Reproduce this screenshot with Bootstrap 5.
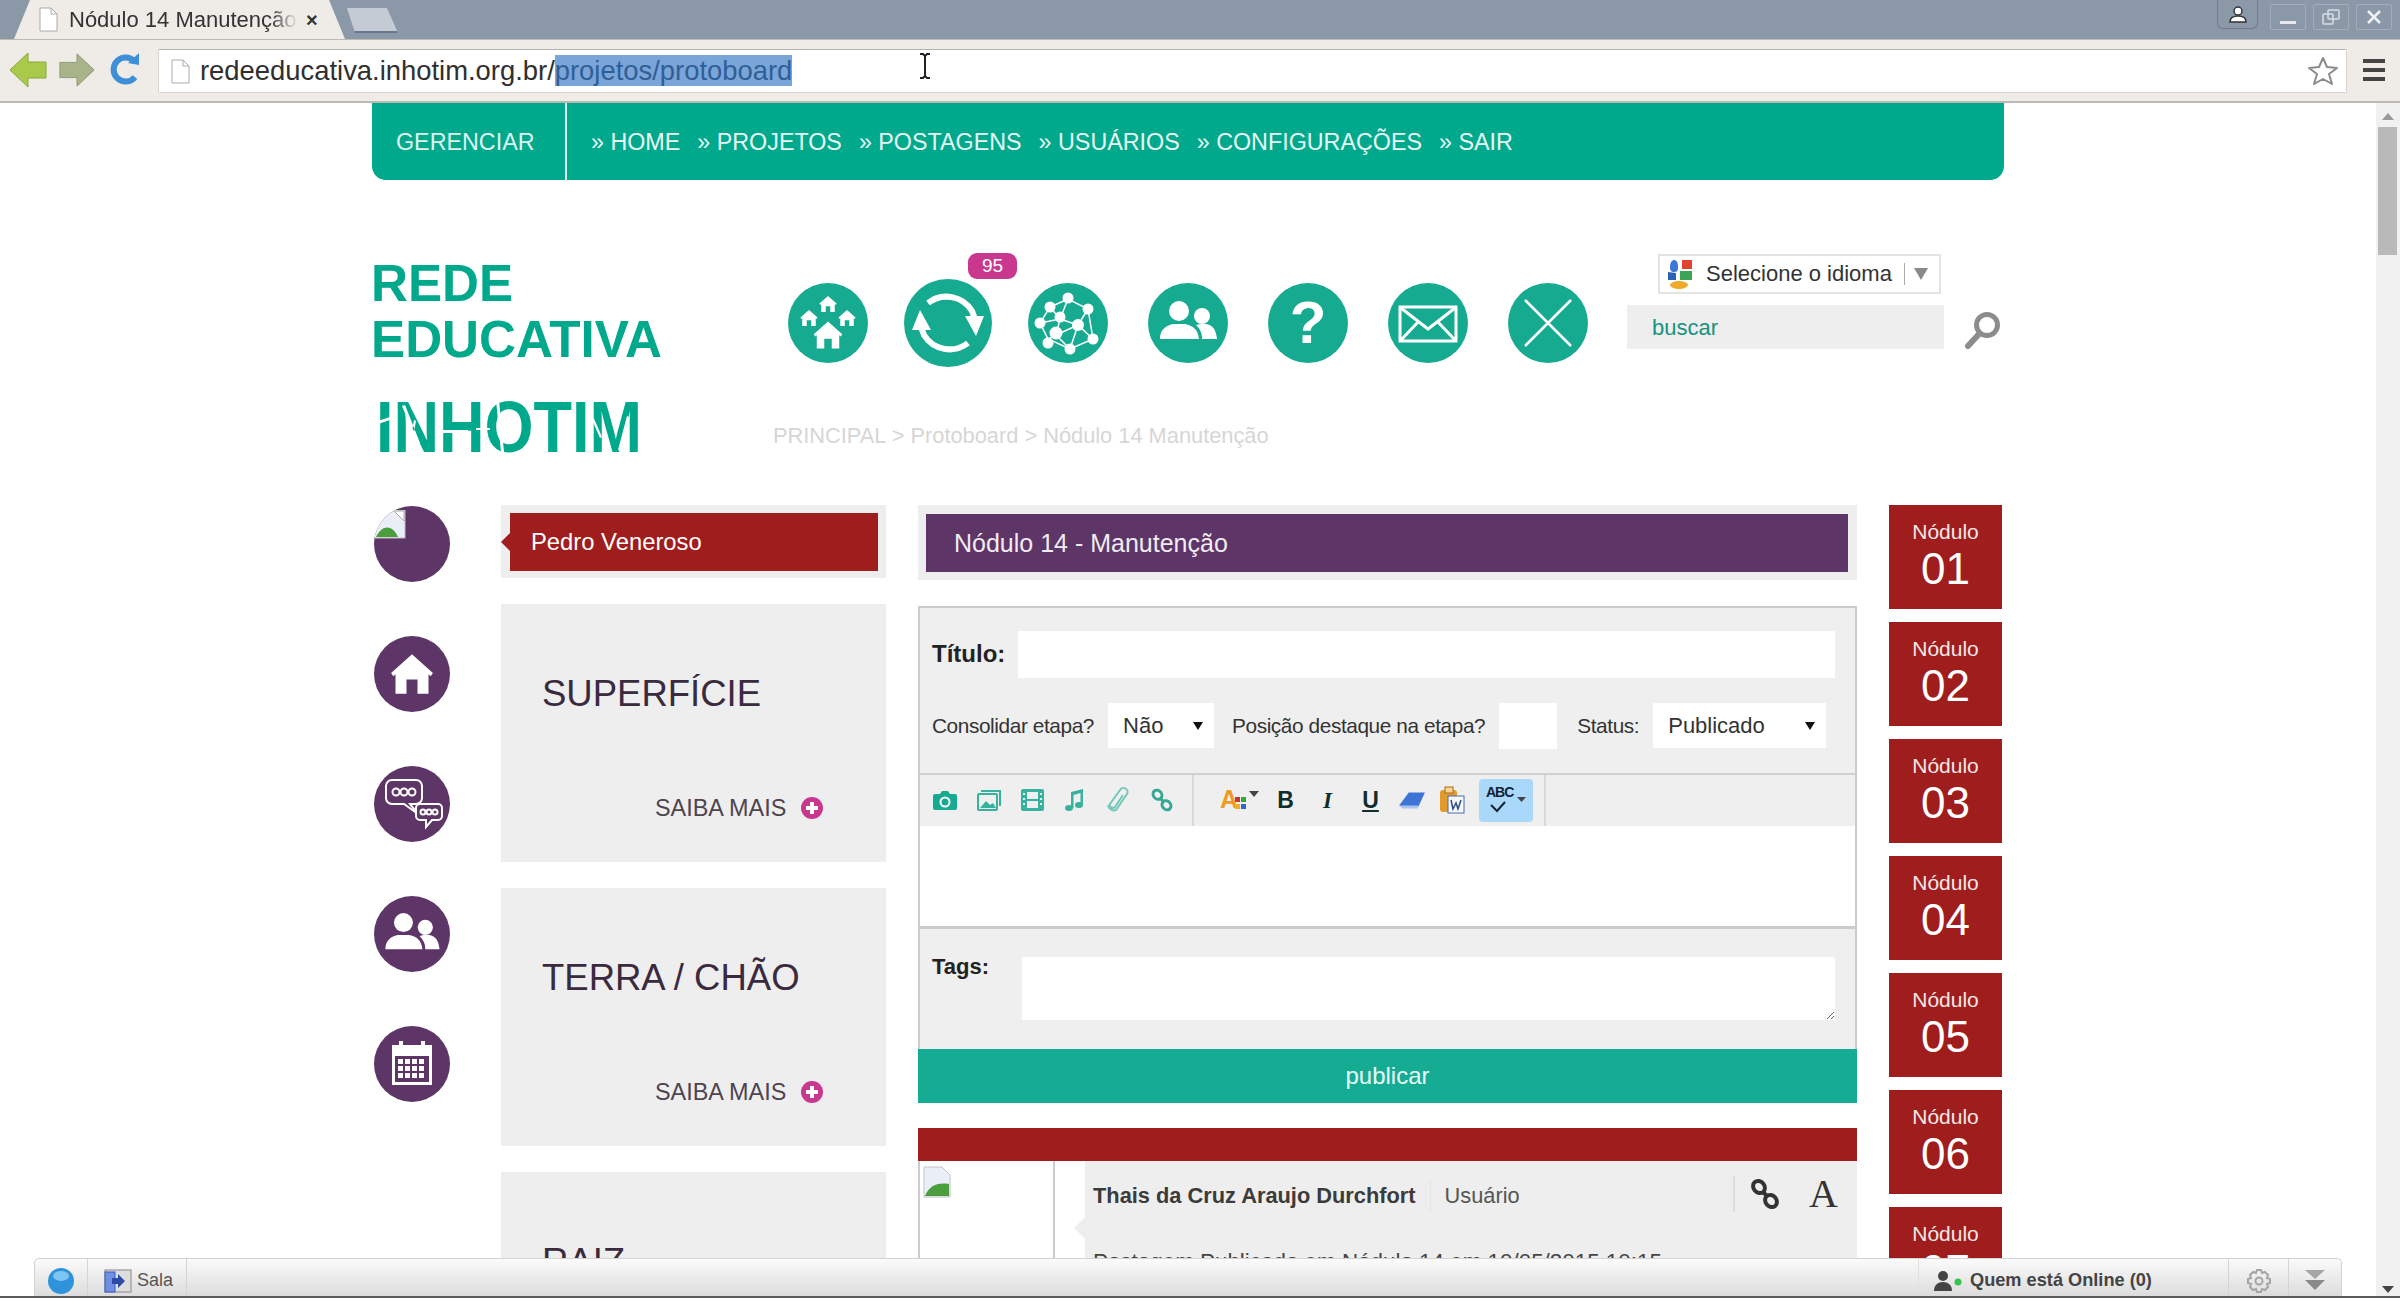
<!DOCTYPE html>
<html lang="pt-BR">
  <head>
    <meta charset="UTF-8" />
    <meta name="viewport" content="width=device-width, initial-scale=1.0" />
    <title>Nódulo 14 Manutenção</title>
    <link rel="stylesheet" href="https://cdn.jsdelivr.net/npm/bootstrap@5.3.2/dist/css/bootstrap.min.css" />
    <style>
      html, body { height: 100%; overflow: hidden; }
      body { font-family: "Liberation Sans", Arial, sans-serif; font-size: 22px; color: #333; background: #fff; }
      .app-root { height: 1298px; border-bottom: 2px solid #5a5a5a; position: relative; overflow: hidden; }

      /* janela do navegador */
      .tab-strip { height: 40px; background: #8b98a8; border-bottom: 1px solid #bdb9b5; padding-left: 14px; }
      .tab-active { width: 331px; height: 39px; background: #efebe7; clip-path: polygon(0 100%, 16px 0, 315px 0, 100% 100%); padding-left: 25px; font-size: 22px; color: #333; white-space: nowrap; }
      .tab-title { width: 232px; padding-left: 3px; overflow: hidden; -webkit-mask-image: linear-gradient(90deg, #000 88%, transparent); mask-image: linear-gradient(90deg, #000 88%, transparent); }
      .tab-new { width: 51px; height: 25px; margin: 8px 0 0 2px; background: #c4cbd4; border-bottom: 2px solid #69778a; clip-path: polygon(0 0, 40px 0, 100% 100%, 8px 100%); }
      .win-btn { width: 36px; height: 26px; border: 1px solid #a3aebb; border-radius: 2px; margin: 4px 0 0 7px; }
      .win-user { width: 41px; height: 29px; margin: 0 5px 0 0; border: 1px solid #6f7d8f; border-top: 0; border-radius: 0 0 6px 6px; }
      .tool-strip { height: 63px; background: #efebe7; border-bottom: 2px solid #bdbab6; }
      .url-box { position: absolute; left: 158px; top: 49px; width: 2189px; height: 44px; background: #fff; border: 1px solid #d8d5d1; border-top-color: #b5b3b0; border-radius: 2px; font-size: 27.4px; color: #2f2f2f; padding-left: 41px; line-height: 42px; }
      .url-sel { background: #7aa5d8; color: #2f5f96; }

      /* pagina */
      .page-area { height: 1195px; overflow: hidden; }
      .page-main { width: 2376px; }
      .scroll-rail { width: 24px; background: #f1f1f1; position: relative; }
      .scroll-thumb { position: absolute; left: 2px; top: 24px; width: 19px; height: 128px; background: #b9b9b9; }
      .scroll-up, .scroll-down { position: absolute; left: 6px; width: 0; height: 0; border-left: 6px solid transparent; border-right: 6px solid transparent; }
      .scroll-up { top: 10px; border-bottom: 7px solid #9a9a9a; }
      .scroll-down { top: 1183px; border-top: 7px solid #444; }
      .site-wrap { width: 1632px; margin: 0 auto; }
      .top-nav { height: 77px; background: #00a88c; border-radius: 0 0 14px 14px; font-size: 23.3px; color: #dff5ef; }
      .top-nav-manage { width: 195px; padding: 2px 0 0 24px; border-right: 2px solid #dff5ef; }
      .top-nav a { color: #e6f8f3; text-decoration: none; white-space: nowrap; }
      .top-nav-links { padding: 2px 0 0 24px; gap: 17px; }

      .site-head { height: 325px; }
      .logo-col { width: 416px; padding-top: 76px; }
      .logo-name { font-size: 51.2px; font-weight: 700; line-height: 56px; color: #00a88c; margin-left: -1px; }
      .logo-mark { display: block; margin-top: 17px; }
      .head-right { padding-top: 74px; }
      .icon-row { gap: 40px; margin-top: 29px; width: 799px; }
      .round-teal { width: 80px; height: 80px; border-radius: 50%; background: #16ab91; flex: none; position: relative; }
      .round-big { width: 88px; height: 88px; margin: -4px; }
      .round-badge { position: absolute; top: -26px; left: 64px; width: 49px; height: 26px; border-radius: 9px; background: #c9378f; color: #fff; font-size: 19px; line-height: 26px; text-align: center; }
      .round-q { color: #fff; font-weight: 700; font-size: 60px; line-height: 80px; text-align: center; }
      .search-col { margin-left: 40px; }
      .lang-box { width: 283px; height: 40px; margin-left: 31px; border: 2px solid #e3e3e3; padding-left: 6px; color: #333; font-size: 22px; white-space: nowrap; }
      .lang-sep { width: 1px; height: 22px; background: #aaa; margin: 0 9px 0 12px; }
      .lang-arrow { width: 0; height: 0; border-left: 7px solid transparent; border-right: 7px solid transparent; border-top: 12px solid #8a8a8a; }
      .search-box { width: 317px; height: 44px; margin-top: 11px; background: #eee; color: #16927e; font-size: 22px; padding: 2px 0 0 25px; }
      .crumbs { margin: 58px 0 0 -15px; color: #d6d6d6; font-size: 21.8px; line-height: 30px; white-space: nowrap; }

      .col-side { width: 129px; padding: 1px 0 0 2px; gap: 54px; }
      .round-purple { width: 76px; height: 76px; border-radius: 50%; background: #5d3566; overflow: hidden; flex: none; }
      .col-themes { width: 385px; }
      .col-center { width: 939px; margin: 0 32px; }
      .col-nodes { width: 113px; gap: 13px; }
      .name-panel { height: 73px; background: #eee; padding: 8px 8px 7px 9px; margin-bottom: 26px; }
      .name-bar { height: 58px; background: #9f1d1d; color: #fff; font-size: 23.8px; line-height: 58px; padding-left: 21px; position: relative; }
      .name-bar::before { content: ""; position: absolute; left: -9px; top: 20px; border-top: 9px solid transparent; border-bottom: 9px solid transparent; border-right: 9px solid #9f1d1d; }
      .theme-box { height: 258px; background: #eee; margin-bottom: 26px; padding: 67px 0 0 41px; color: #3a2a3e; }
      .theme-title { font-size: 36.5px; line-height: 46px; }
      .theme-more { margin: 77px 0 0 113px; font-size: 23.4px; line-height: 28px; color: #4d4450; gap: 15px; }
      .plus-dot { width: 22px; height: 22px; border-radius: 50%; background: #c9378f; position: relative; }
      .plus-dot::before { content: ""; position: absolute; left: 5px; right: 5px; top: 9px; height: 4px; background: #fff; }
      .plus-dot::after { content: ""; position: absolute; top: 5px; bottom: 5px; left: 9px; width: 4px; background: #fff; }

      .title-panel { height: 75px; background: #eee; padding: 9px 9px 8px 8px; margin-bottom: 26px; }
      .title-bar { height: 58px; background: #5d3566; color: #f1ecf3; font-size: 25px; line-height: 58px; padding-left: 28px; }
      .form-shell { background: #efefef; border: 2px solid #ccc; border-bottom: 0; }
      .form-head { height: 167px; padding: 23px 20px 0 12px; border-bottom: 2px solid #d0d0d0; }
      .lbl-strong { font-weight: 700; color: #222; font-size: 24px; }
      .lbl-plain { font-size: 20.8px; letter-spacing: -.4px; color: #333; white-space: nowrap; }
      .field-title { width: 817px; height: 47px; margin-left: 13px; border: 0; border-radius: 0; }
      .field-row { margin-top: 25px; }
      .field-sel { height: 45px; border: 0; border-radius: 0; font-size: 22px; color: #333; padding: 0 0 0 15px; background-position: right 10px center; background-size: 12px 10px; background-image: url("data:image/svg+xml,%3Csvg xmlns='http://www.w3.org/2000/svg' viewBox='0 0 12 10'%3E%3Cpath d='M1 1h10L6 9z' fill='%23111'/%3E%3C/svg%3E"); }
      .field-pos { width: 58px; height: 46px; border: 0; border-radius: 0; }
      .gap-14 { margin-left: 14px; }
      .gap-18 { margin-left: 18px; }
      .gap-20 { margin-left: 20px; }
      .tool-bar { height: 51px; }
      .tool-group { width: 274px; height: 51px; padding-left: 13px; border-right: 2px solid #d8d8d8; gap: 20px; }
      .tool-group2 { width: 352px; height: 51px; padding-left: 26px; border-right: 2px solid #d8d8d8; position: relative; }
      .tool-abc { position: absolute; left: 285px; top: 4px; width: 54px; height: 43px; background: #a9d8fb; border-radius: 4px; }
      .tool-abc-t { font-size: 14px; font-weight: 700; color: #123; line-height: 14px; position: absolute; left: 7px; top: 6px; letter-spacing: -1px; }
      .tool-b { font-weight: 700; font-size: 23px; color: #0f2e2e; line-height: 1; }
      .editor-area { height: 103px; background: #fff; border-bottom: 3px solid #ccc; }
      .tags-row { height: 120px; padding: 28px 20px 0 12px; }
      .tags-lbl { width: 90px; font-size: 22px; margin-top: -7px; }
      .tags-field { height: 63px; border: 0; border-radius: 0; flex: 1; }
      .btn-publish { height: 54px; background: #16ab93; color: #e9fbf7; font-size: 24px; border: 0; border-radius: 0; width: 100%; padding: 0; }
      .post-bar { height: 33px; background: #9f1d1d; margin-top: 25px; }
      .post-body { height: 300px; }
      .post-avatar { width: 137px; background: #fff; border: 2px solid #ccc; border-top: 0; border-bottom: 0; flex: none; padding: 3px 0 0 3px; }
      .post-gap { width: 30px; flex: none; position: relative; }
      .post-gap::after { content: ""; position: absolute; right: 0; top: 56px; border-top: 11px solid transparent; border-bottom: 11px solid transparent; border-right: 11px solid #eee; }
      .post-panel { background: #eee; padding: 19px 0 0 8px; }
      .post-head { height: 32px; }
      .post-author { font-weight: 700; font-size: 21.8px; color: #3b3b3b; white-space: nowrap; padding-right: 14px; border-right: 1px solid #e4e4e4; }
      .post-role { color: #555; font-size: 21.8px; padding-left: 14px; }
      .post-tools { margin-left: auto; width: 124px; border-left: 2px solid #ddd; height: 36px; padding-left: 15px; margin-top: -4px; }
      .post-serif { font-family: "Liberation Serif", serif; font-size: 40px; line-height: 36px; color: #333; margin-left: 29px; }
      .post-meta { margin-top: 33px; font-size: 22.4px; color: #444; white-space: nowrap; }
      .node-box { height: 104px; background: #9f1d1d; color: #f6e7e7; text-align: center; font-size: 21px; line-height: 24px; padding-top: 15px; flex: none; }
      .node-num { display: block; font-size: 44px; line-height: 50px; color: #fff; }

      /* barra inferior */
      .chat-bar { position: absolute; left: 34px; top: 1258px; width: 2308px; height: 38px; background: linear-gradient(#fbfbfb, #dcdcdc); border: 1px solid #d3d3d3; border-bottom: 0; border-radius: 5px 5px 0 0; font-size: 18px; color: #555; }
      .chat-cell { height: 100%; padding-top: 6px; border-right: 1px solid #d4d4d4; }
      .chat-online { font-weight: 700; font-size: 18.2px; color: #444; white-space: nowrap; }
      .cursor-beam { position: absolute; left: 918px; top: 53px; }
    </style>
  </head>
  <body>
    <svg class="d-none">
      <symbol id="i-house" viewBox="0 0 40 38"><path d="M20 1 39 18l-2 3-2-1.700V37H25V24H15V37H5V19.300L3 21 1 18z" fill="#fff" /></symbol>
      <symbol id="i-users" viewBox="0 0 80 80"><circle cx="31" cy="28" r="10" fill="#fff" /><circle cx="54" cy="33" r="8" fill="#fff" /><path d="M12 56c0-9 5-13 13-15h12c9 2 13 6 14 15zM48 42c3-1 5-1 10-1 7 1 10 6 11 15H54c0-6-2-10-6-14z" fill="#fff" /></symbol>
      <symbol id="i-link" viewBox="0 0 30 32"><g fill="none" stroke="currentColor" stroke-width="4"><ellipse cx="9" cy="9" rx="5.500" ry="6.500" transform="rotate(-40 9 9)" /><ellipse cx="21" cy="23" rx="5.500" ry="6.500" transform="rotate(-40 21 23)" /><path d="M12 13l6 6" /></g></symbol>
    </svg>

    <div class="app-root d-flex flex-column">
      <div class="tab-strip d-flex flex-none">
        <div class="tab-active d-flex align-items-center">
          <svg width="19" height="25" viewBox="0 0 19 25" class="me-2 flex-shrink-0"><path d="M1 1h11l6 6v17H1z" fill="#fff" stroke="#aaa" /><path d="M12 1v6h6" fill="none" stroke="#aaa" /></svg>
          <span class="tab-title">Nódulo 14 Manutenção</span>
          <span class="ms-2 fw-bold" style="font-size:20px">×</span>
        </div>
        <div class="tab-new"></div>
        <div class="ms-auto d-flex me-2">
          <div class="win-user d-flex align-items-center justify-content-center">
            <svg width="18" height="18" viewBox="0 0 18 18"><circle cx="9" cy="6" r="4" fill="#fff" stroke="#333" stroke-width="1.500" /><path d="M1 17c0-5 4-6 8-6s8 1 8 6z" fill="#fff" stroke="#333" stroke-width="1.500" /></svg>
          </div>
          <div class="win-btn d-flex align-items-end justify-content-center pb-1"><svg width="16" height="4"><rect width="16" height="3" fill="#e6e9ee" /></svg></div>
          <div class="win-btn d-flex align-items-center justify-content-center"><svg width="18" height="16" viewBox="0 0 18 16" fill="none" stroke="#d8dde4" stroke-width="1.500"><rect x="6" y="1" width="11" height="9" rx="1" /><rect x="1" y="5" width="10" height="10" rx="1" /></svg></div>
          <div class="win-btn d-flex align-items-center justify-content-center"><svg width="16" height="16" stroke="#eef0f3" stroke-width="2.500"><path d="M2 2l12 12M14 2 2 14" /></svg></div>
        </div>
      </div>
      <div class="tool-strip d-flex align-items-center flex-none">
        <svg width="40" height="40" viewBox="0 0 40 40" class="ms-2"><path d="M2 20 20 3v9h18v16H20v9z" fill="#a9c94a" stroke="#8aa836" /></svg>
        <svg width="38" height="40" viewBox="0 0 40 40" style="margin-left:10px"><path d="M38 20 20 3v9H2v16h18v9z" fill="#a8b38a" stroke="#8f9a74" /></svg>
        <svg width="34" height="40" viewBox="0 0 34 40" style="margin-left:12px"><path d="M27 27a12 12 0 1 1 0-15" fill="none" stroke="#3f8fd8" stroke-width="6" /><path d="M20 13 31 3v12z" fill="#3f8fd8" /></svg>
      </div>
      <div class="url-box">
        <svg width="19" height="25" viewBox="0 0 19 25" class="position-absolute" style="left:12px;top:9px"><path d="M1 1h11l6 6v17H1z" fill="#fff" stroke="#aaa" /><path d="M12 1v6h6" fill="none" stroke="#aaa" /></svg>
        redeeducativa.inhotim.org.br/<span class="url-sel">projetos/protoboard</span>
        <svg width="30" height="30" viewBox="0 0 30 30" class="position-absolute" style="right:8px;top:6px"><path d="M15 2l4 9 10 1-8 6 3 10-9-5-9 5 3-10-8-6 10-1z" fill="#fff" stroke="#8a8a8a" stroke-width="2" stroke-linejoin="round" /></svg>
      </div>
      <svg width="24" height="24" viewBox="0 0 24 24" class="position-absolute" style="left:2362px;top:58px"><path d="M1 3h22M1 12h22M1 21h22" stroke="#444" stroke-width="4" /></svg>
      <svg class="cursor-beam" width="14" height="26" viewBox="0 0 14 26"><path d="M2 1h3l2 2 2-2h3M7 3v20M2 25h3l2-2 2 2h3" fill="none" stroke="#222" stroke-width="2" /></svg>

      <div class="page-area d-flex">
        <div class="page-main">
          <div class="site-wrap">
            <nav class="top-nav d-flex align-items-center">
              <div class="top-nav-manage h-100 d-flex align-items-center">GERENCIAR</div>
              <div class="top-nav-links d-flex">
                <a href="#">» HOME</a>
                <a href="#">» PROJETOS</a>
                <a href="#">» POSTAGENS</a>
                <a href="#">» USUÁRIOS</a>
                <a href="#">» CONFIGURAÇÕES</a>
                <a href="#">» SAIR</a>
              </div>
            </nav>

            <header class="site-head d-flex">
              <div class="logo-col">
                <div class="logo-name">REDE<br />EDUCATIVA</div>
                <svg class="logo-mark" width="340" height="84" viewBox="0 -13 340 84">
                  <text x="4" y="54" font-family="Liberation Sans" font-weight="700" font-size="73" fill="#00a88c" textLength="266" lengthAdjust="spacingAndGlyphs">INHOTIM</text>
                  <path d="M3 24 18 19v3L3 27zM30 8 46 46l2-1L33 7zM38 44l4-22 2 1-4 22zM68 32h28v3H68zM81 36h3v5h-3zM81 44h3v2h-3zM124 2l5 52h3L127 2zM104 30h14v2h-14zM214 8l14 32 2-1-14-32zM246 52l9-34 2 1-9 34zM186 28h14v2h-14z" fill="#fff" />
                </svg>
              </div>
              <div class="head-right flex-grow-1">
                <div class="d-flex">
                  <div class="icon-row d-flex align-items-center">
                    <div class="round-teal">
                      <svg width="80" height="80" viewBox="0 0 80 80">
                        <use href="#i-house" x="25" y="37" width="30" height="30" />
                        <use href="#i-house" x="31" y="12" width="18" height="18" />
                        <use href="#i-house" x="12" y="26" width="18" height="18" />
                        <use href="#i-house" x="50" y="26" width="18" height="18" />
                      </svg>
                    </div>
                    <div class="round-teal round-big">
                      <svg width="88" height="88" viewBox="0 0 88 88" fill="none" stroke="#fff" stroke-width="6">
                        <path d="M24 24a30 30 0 0 1 44 8l3 8M64 64a30 30 0 0 1-44-8l-3-8" />
                        <path d="M61 37h19l-8 20zM27 51H8l8-20z" fill="#fff" stroke="none" />
                      </svg>
                      <span class="round-badge">95</span>
                    </div>
                    <div class="round-teal">
                      <svg width="80" height="80" viewBox="0 0 80 80">
                        <g stroke="#fff" stroke-width="1.500" fill="none"><path d="M22 24 40 16 60 26 65 56 42 66 20 56 12 40 22 24 32 36 28 52 42 66 M40 16 32 36 50 42 60 26 M50 42 65 56 M50 42 28 52 20 56 M12 40 32 36 M50 42 42 66" /></g>
                        <g fill="#fff"><circle cx="22" cy="24" r="5.500" /><circle cx="40" cy="15" r="5.500" /><circle cx="60" cy="26" r="5.500" /><circle cx="12" cy="40" r="5.500" /><circle cx="32" cy="34" r="5.500" /><circle cx="50" cy="42" r="6" /><circle cx="28" cy="50" r="6.500" /><circle cx="20" cy="60" r="5.500" /><circle cx="42" cy="66" r="5.500" /><circle cx="65" cy="56" r="5.500" /></g>
                      </svg>
                    </div>
                    <div class="round-teal"><svg width="80" height="80"><use href="#i-users" /></svg></div>
                    <div class="round-teal round-q">?</div>
                    <div class="round-teal">
                      <svg width="80" height="80" viewBox="0 0 80 80" fill="none" stroke="#fff" stroke-width="3"><rect x="12" y="24" width="56" height="34" /><path d="M13 25 40 46 67 25M13 57 31 38M67 57 49 38" /></svg>
                    </div>
                    <div class="round-teal">
                      <svg width="80" height="80" viewBox="0 0 80 80" stroke="#fff" stroke-width="2.500"><path d="M17 17 63 63M63 17 17 63" /></svg>
                    </div>
                  </div>
                  <div class="search-col">
                    <div class="lang-box d-flex align-items-center">
                      <svg width="30" height="32" viewBox="0 0 30 32" class="flex-shrink-0" style="margin-right:10px"><path d="M8 2c3 0 4 3 4 7s-1 5-4 5-4-2-4-5 1-7 4-7z" fill="#3b78d8" /><path d="M16 2h10v9H16z" fill="#e0442f" /><path d="M2 14l8 1v7H2z" fill="#2a62b8" /><path d="M14 13h12v9H14z" fill="#3aa655" /><ellipse cx="13" cy="27" rx="9" ry="4" fill="#f0a92b" /></svg>
                      <span>Selecione o idioma</span><span class="lang-sep"></span><span class="lang-arrow"></span>
                    </div>
                    <div class="d-flex">
                      <div class="search-box d-flex align-items-center">buscar</div>
                      <svg width="40" height="40" viewBox="0 0 40 40" style="margin:16px 0 0 19px"><circle cx="24" cy="15" r="10.500" fill="none" stroke="#8c8c8c" stroke-width="5" /><path d="M16 24 5 36" stroke="#8c8c8c" stroke-width="6" stroke-linecap="round" /></svg>
                    </div>
                  </div>
                </div>
                <div class="crumbs">PRINCIPAL &gt; Protoboard &gt; Nódulo 14 Manutenção</div>
              </div>
            </header>

            <main class="d-flex align-items-start">
              <aside class="col-side d-flex flex-column flex-none">
                <div class="round-purple">
                  <svg width="32" height="29" viewBox="0 0 32 29"><rect width="31" height="28" fill="#e9eef7" stroke="#bbb" /><path d="M2 27C8 15 18 14 24 27z" fill="#4a9f3c" /><path d="M20 1h10v10z" fill="#fff" stroke="#aaa" /></svg>
                </div>
                <div class="round-purple d-flex align-items-center justify-content-center"><svg width="44" height="42"><use href="#i-house" /></svg></div>
                <div class="round-purple">
                  <svg width="76" height="76" viewBox="0 0 76 76" fill="none" stroke="#fff" stroke-width="2">
                    <path d="M18 14h24a6 6 0 0 1 6 6v12a6 6 0 0 1-6 6h-6l8 10-14-10H18a6 6 0 0 1-6-6V20a6 6 0 0 1 6-6z" />
                    <circle cx="22" cy="26" r="3.500" /><circle cx="30" cy="26" r="3.500" /><circle cx="38" cy="26" r="3.500" />
                    <path d="M46 38h18a4 4 0 0 1 4 4v8a4 4 0 0 1-4 4H58l-6 7 0-7h-6a4 4 0 0 1-4-4v-8a4 4 0 0 1 4-4z" fill="#5d3566" />
                    <circle cx="49" cy="46" r="2.500" /><circle cx="55" cy="46" r="2.500" /><circle cx="61" cy="46" r="2.500" />
                  </svg>
                </div>
                <div class="round-purple"><svg width="76" height="76" viewBox="0 0 80 80"><use href="#i-users" /></svg></div>
                <div class="round-purple">
                  <svg width="76" height="76" viewBox="0 0 76 76" fill="#fff">
                    <path d="M18 19h40v40H18zM21 30v26h34V30z" fill-rule="evenodd" /><rect x="25" y="15" width="4" height="8" /><rect x="47" y="15" width="4" height="8" />
                    <path d="M24 33h5v5h-5zM31 33h5v5h-5zM38 33h5v5h-5zM45 33h5v5h-5zM24 40h5v5h-5zM31 40h5v5h-5zM38 40h5v5h-5zM45 40h5v5h-5zM24 47h5v5h-5zM31 47h5v5h-5zM38 47h5v5h-5zM45 47h5v5h-5z" />
                  </svg>
                </div>
              </aside>

              <section class="col-themes flex-none">
                <div class="name-panel"><div class="name-bar">Pedro Veneroso</div></div>
                <div class="theme-box">
                  <div class="theme-title">SUPERFÍCIE</div>
                  <div class="theme-more d-flex align-items-center">SAIBA MAIS <span class="plus-dot"></span></div>
                </div>
                <div class="theme-box">
                  <div class="theme-title">TERRA / CHÃO</div>
                  <div class="theme-more d-flex align-items-center">SAIBA MAIS <span class="plus-dot"></span></div>
                </div>
                <div class="theme-box">
                  <div class="theme-title">RAIZ</div>
                </div>
              </section>

              <section class="col-center flex-none">
                <div class="title-panel"><div class="title-bar">Nódulo 14 - Manutenção</div></div>
                <form class="form-shell">
                  <div class="form-head">
                    <div class="d-flex align-items-center">
                      <label class="lbl-strong">Título:</label>
                      <input class="form-control field-title" type="text" />
                    </div>
                    <div class="field-row d-flex align-items-center">
                      <label class="lbl-plain">Consolidar etapa?</label>
                      <select class="form-select field-sel gap-14" style="width:106px"><option>Não</option></select>
                      <label class="lbl-plain gap-18">Posição destaque na etapa?</label>
                      <input class="form-control field-pos gap-14" type="text" />
                      <label class="lbl-plain gap-20">Status:</label>
                      <select class="form-select field-sel gap-14" style="width:173px"><option>Publicado</option></select>
                    </div>
                  </div>
                  <div class="tool-bar d-flex">
                    <div class="tool-group d-flex align-items-center">
                      <svg width="24" height="22" viewBox="0 0 24 22"><path d="M2 5h5l2-3h6l2 3h5a2 2 0 0 1 2 2v12a2 2 0 0 1-2 2H2a2 2 0 0 1-2-2V7a2 2 0 0 1 2-2z" fill="#16ab91" /><circle cx="12" cy="13" r="4.500" fill="none" stroke="#fff" stroke-width="2" /></svg>
                      <svg width="24" height="22" viewBox="0 0 24 22" fill="none" stroke="#35b39d" stroke-width="2"><rect x="1" y="5" width="19" height="16" rx="1" /><path d="M4 2h19v15" /><path d="M3 19l6-7 4 4 3-2 3 5z" fill="#35b39d" stroke="none" /></svg>
                      <svg width="23" height="22" viewBox="0 0 23 22"><rect width="23" height="22" rx="2" fill="#35b39d" /><path d="M6 3h11v7H6zM6 12h11v7H6z" fill="#efefef" /><path d="M2 4h2v2H2zM2 9h2v2H2zM2 14h2v2H2zM19 4h2v2h-2zM19 9h2v2h-2zM19 14h2v2h-2z" fill="#efefef" /></svg>
                      <svg width="22" height="24" viewBox="0 0 22 24" fill="#35b39d"><path d="M7 4l12-3v15h-2.500V5L9.500 7v13H7z" /><ellipse cx="5" cy="20" rx="4" ry="3" /><ellipse cx="15" cy="17" rx="4" ry="3" /></svg>
                      <svg width="24" height="26" viewBox="0 0 24 26" fill="none" stroke="#75c8b8" stroke-width="2"><path d="M17 8 9 20a3 3 0 0 1-5-3L14 3a4 4 0 0 1 7 4L10 23a6 6 0 0 1-8-5" /></svg>
                      <svg width="24" height="24" style="color:#35a893"><use href="#i-link" /></svg>
                    </div>
                    <div class="tool-group2 d-flex align-items-center">
                      <span style="width:46px" class="position-relative">
                        <span class="fw-bold" style="color:#ef9a1f;font-size:25px;line-height:1">A</span>
                        <svg width="14" height="14" class="position-absolute" style="left:15px;top:13px"><rect width="5" height="5" x="0" y="0" fill="#c33" /><rect width="5" height="5" x="6" y="0" fill="#3a3" /><rect width="5" height="5" x="0" y="7" fill="#f0b020" /><rect width="5" height="5" x="6" y="7" fill="#36c" /></svg>
                        <svg width="10" height="6" class="position-absolute" style="left:29px;top:7px"><path d="M0 0h10L5 6z" fill="#444" /></svg>
                      </span>
                      <span class="tool-b" style="width:41px;text-align:center;margin-left:-1px">B</span>
                      <span class="tool-b fst-italic" style="width:43px;text-align:center;font-family:'Liberation Serif',serif">I</span>
                      <span class="tool-b text-decoration-underline" style="width:43px;text-align:center">U</span>
                      <svg width="28" height="22" viewBox="0 0 26 20" style="margin:0 13px 0 6px"><path d="M1 15 10 3h15l-6 13H5z" fill="#3e74d6" /><path d="M1 15h18l-1 3H4z" fill="#a9c4ee" /></svg>
                      <svg width="26" height="28" viewBox="0 0 26 28"><rect x="1" y="4" width="17" height="22" rx="3" fill="#e39a2c" /><rect x="6" y="1" width="8" height="6" fill="#f7d793" stroke="#a86d12" /><rect x="9" y="10" width="16" height="17" fill="#f4f7fb" stroke="#4a6ea8" /><path d="M12 14l2 9 3-6 2 6 3-9" fill="none" stroke="#2b4d86" stroke-width="1.500" /></svg>
                      <div class="tool-abc">
                        <span class="tool-abc-t">ABC</span>
                        <svg width="16" height="12" class="position-absolute" style="left:11px;top:22px"><path d="M1 4l6 6 8-9" fill="none" stroke="#123" stroke-width="2" /></svg>
                        <svg width="9" height="5" class="position-absolute" style="left:38px;top:18px"><path d="M0 0h9L4.500 5z" fill="#444" /></svg>
                      </div>
                    </div>
                  </div>
                  <div class="editor-area"></div>
                  <div class="tags-row d-flex">
                    <label class="lbl-strong tags-lbl">Tags:</label>
                    <textarea class="form-control tags-field"></textarea>
                  </div>
                </form>
                <button class="btn btn-publish" type="button">publicar</button>
                <div class="post-bar"></div>
                <div class="post-body d-flex">
                  <div class="post-avatar">
                    <svg width="28" height="32" viewBox="0 0 28 32"><path d="M1 1h18l8 8v22H1z" fill="#e9eef7" stroke="#c4c4c4" /><path d="M2 30C6 20 14 16 26 18v12z" fill="#4a9f3c" /></svg>
                  </div>
                  <div class="post-gap"></div>
                  <div class="post-panel flex-grow-1">
                    <div class="post-head d-flex align-items-center">
                      <span class="post-author">Thais da Cruz Araujo Durchfort</span>
                      <span class="post-role">Usuário</span>
                      <div class="post-tools d-flex align-items-center">
                        <svg width="30" height="32" style="color:#333"><use href="#i-link" /></svg>
                        <span class="post-serif">A</span>
                      </div>
                    </div>
                    <div class="post-meta">Postagem Publicada em Nódulo 14 em 10/05/2015 10:15</div>
                  </div>
                </div>
              </section>

              <aside class="col-nodes d-flex flex-column flex-none">
                <div class="node-box">Nódulo<span class="node-num">01</span></div>
                <div class="node-box">Nódulo<span class="node-num">02</span></div>
                <div class="node-box">Nódulo<span class="node-num">03</span></div>
                <div class="node-box">Nódulo<span class="node-num">04</span></div>
                <div class="node-box">Nódulo<span class="node-num">05</span></div>
                <div class="node-box">Nódulo<span class="node-num">06</span></div>
                <div class="node-box">Nódulo<span class="node-num">07</span></div>
              </aside>
            </main>
          </div>
        </div>
        <div class="scroll-rail flex-none"><span class="scroll-up"></span><span class="scroll-thumb"></span><span class="scroll-down"></span></div>
      </div>

      <div class="chat-bar d-flex align-items-center">
        <div class="chat-cell d-flex align-items-center justify-content-center" style="width:53px">
          <svg width="26" height="26" viewBox="0 0 26 26"><circle cx="13" cy="13" r="13" fill="#2f93dc" /><ellipse cx="13" cy="8" rx="8" ry="5" fill="#7cc4f2" /></svg>
        </div>
        <div class="chat-cell d-flex align-items-center ps-3 pe-3" style="width:99px">
          <svg width="28" height="24" viewBox="0 0 28 24" class="flex-shrink-0" style="margin-right:5px"><rect x="1" y="1" width="26" height="22" fill="#ddd" stroke="#888" /><rect x="1" y="3" width="10" height="20" fill="#6f8fe0" stroke="#3d5cb8" /><path d="M8 9h6V5l7 7-7 7v-4H8z" fill="#2d4aa6" /></svg>
          Sala
        </div>
        <div class="ms-auto d-flex align-items-center h-100">
          <div class="chat-cell d-flex align-items-center border-start" style="width:311px;padding-left:15px">
            <svg width="32" height="22" viewBox="0 0 32 22" class="flex-shrink-0" style="margin-right:4px"><circle cx="9" cy="6" r="5" fill="#444" /><path d="M0 21c0-6 4-9 9-9s9 3 9 9z" fill="#444" /><circle cx="24" cy="12" r="3.500" fill="#3bc24a" /></svg>
            <span class="chat-online">Quem está Online (0)</span>
          </div>
          <div class="chat-cell d-flex align-items-center justify-content-center" style="width:60px">
            <svg width="24" height="24" viewBox="0 0 24 24" fill="none" stroke="#a5a5a5" stroke-width="2"><circle cx="12" cy="12" r="3.500" /><path d="M10 1h4l1 3 3-1 3 3-1 3 3 1v4l-3 1 1 3-3 3-3-1-1 3h-4l-1-3-3 1-3-3 1-3-3-1v-4l3-1-1-3 3-3 3 1z" /></svg>
          </div>
          <div class="d-flex align-items-center justify-content-center" style="width:52px;padding-top:4px">
            <svg width="22" height="22" viewBox="0 0 22 22"><path d="M1 1h20l-10 9z" fill="#a5a5a5" /><path d="M1 11h20L11 21z" fill="#8a8a8a" /></svg>
          </div>
        </div>
      </div>
    </div>
    <script src="https://cdn.jsdelivr.net/npm/bootstrap@5.3.2/dist/js/bootstrap.bundle.min.js"></script>
  </body>
</html>
